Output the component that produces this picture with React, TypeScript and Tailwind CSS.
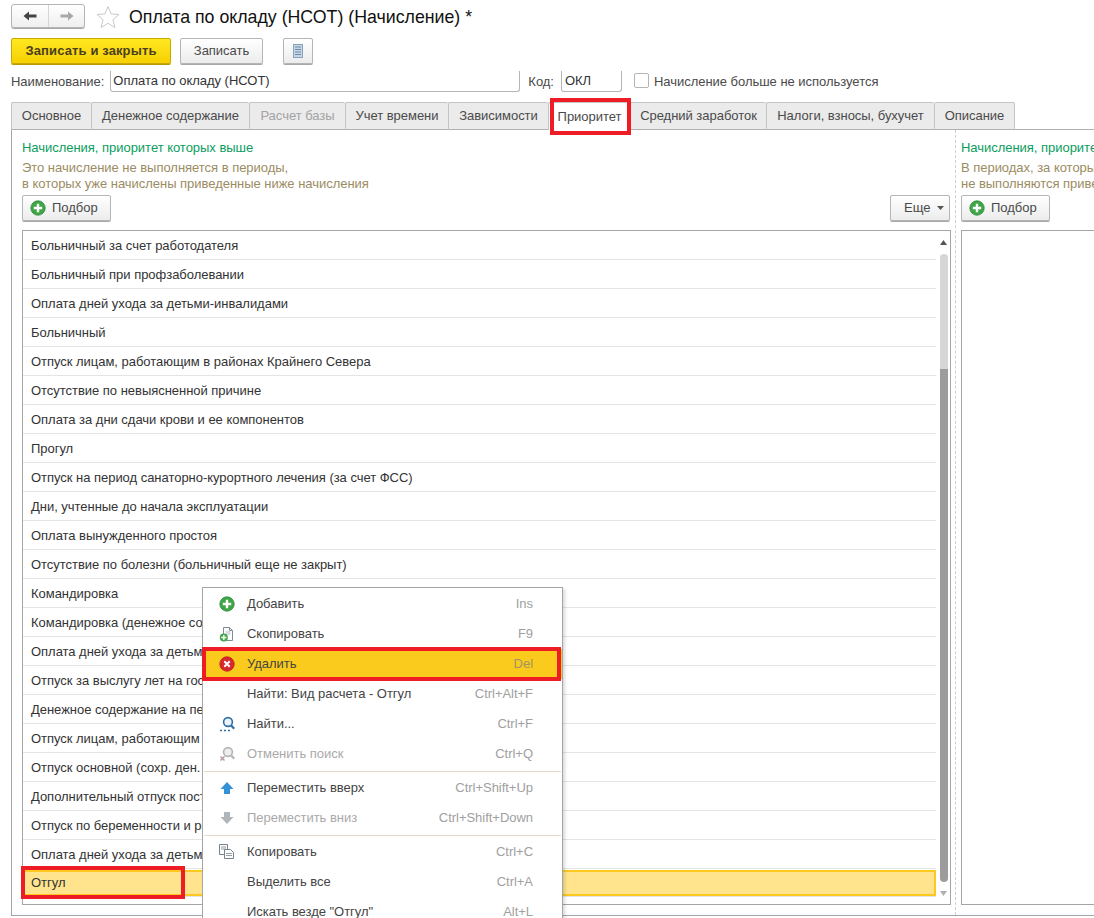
const tabs = [
  { label: 'Основное', w: 'w-[80px]' },
  { label: 'Денежное содержание', w: 'w-[158px]' },
  { label: 'Расчет базы', w: 'w-[96px]', disabled: true },
  { label: 'Учет времени', w: 'w-[103px]' },
  { label: 'Зависимости', w: 'w-[100px]' },
  { label: 'Приоритет', w: 'w-[82px]', active: true },
  { label: 'Средний заработок', w: 'w-[136px]' },
  { label: 'Налоги, взносы, бухучет', w: 'w-[168px]' },
  { label: 'Описание', w: 'w-[81px]' },
]

const rows = [
  'Больничный за счет работодателя',
  'Больничный при профзаболевании',
  'Оплата дней ухода за детьми-инвалидами',
  'Больничный',
  'Отпуск лицам, работающим в районах Крайнего Севера',
  'Отсутствие по невыясненной причине',
  'Оплата за дни сдачи крови и ее компонентов',
  'Прогул',
  'Отпуск на период санаторно-курортного лечения (за счет ФСС)',
  'Дни, учтенные до начала эксплуатации',
  'Оплата вынужденного простоя',
  'Отсутствие по болезни (больничный еще не закрыт)',
  'Командировка',
  'Командировка (денежное содержание)',
  'Оплата дней ухода за детьми-инвалидами',
  'Отпуск за выслугу лет на госслужбе',
  'Денежное содержание на период отпуска',
  'Отпуск лицам, работающим в районах Крайнего Севера',
  'Отпуск основной (сохр. ден. содержания)',
  'Дополнительный отпуск пострадавшим',
  'Отпуск по беременности и родам',
  'Оплата дней ухода за детьми-инвалидами',
]

function PlusIcon({ size = 16 }: { size?: number }) {
  return (
    <svg width={size} height={size} viewBox="0 0 16 16">
      <circle cx="8" cy="8" r="7.2" fill="#3fa648" stroke="#2b8a3a" strokeWidth="0.8" />
      <path d="M8 3.8v8.4M3.8 8h8.4" stroke="#fff" strokeWidth="2.4" />
    </svg>
  )
}

function RemoveIcon() {
  return (
    <svg width="16" height="16" viewBox="0 0 16 16">
      <circle cx="8" cy="8" r="7.2" fill="#d9262e" stroke="#b71c23" strokeWidth="0.8" />
      <path d="M5.3 5.3l5.4 5.4M10.7 5.3l-5.4 5.4" stroke="#fff" strokeWidth="2" />
    </svg>
  )
}

function CopyAddIcon() {
  return (
    <svg width="16" height="16" viewBox="0 0 16 16">
      <path d="M4.5 1.5h6l3 3v10h-9z" fill="#fff" stroke="#7f8c99" />
      <path d="M10.5 1.5v3h3" fill="none" stroke="#7f8c99" />
      <path d="M6.5 6h5M6.5 8h5" stroke="#9aa5af" strokeWidth="0.8" />
      <circle cx="4.8" cy="11.5" r="4" fill="#3fa648" />
      <path d="M4.8 9v5M2.3 11.5h5" stroke="#fff" strokeWidth="1.4" />
    </svg>
  )
}

function SearchIcon({ off }: { off?: boolean }) {
  const c = off ? '#b5b5b5' : '#2f6fa5'
  return (
    <svg width="16" height="16" viewBox="0 0 16 16">
      <circle cx="9" cy="6" r="4.4" fill={off ? '#eee' : '#eaf3fa'} stroke={c} strokeWidth="1.6" />
      <path d="M12.2 9.4l3 3.4" stroke={c} strokeWidth="2.2" />
      {off ? (
        <path d="M1.5 10.5l4 4M5.5 10.5l-4 4" stroke="#b89aa0" strokeWidth="1.6" />
      ) : (
        <path d="M1 14.5h2M5 14.5h2M9 14.5h2" stroke="#2f6fa5" strokeWidth="1.6" />
      )}
    </svg>
  )
}

function ArrowIcon({ down, color }: { down?: boolean; color: string }) {
  return (
    <svg width="16" height="16" viewBox="0 0 16 16">
      <path d={down ? 'M5 2h6v5h3.5L8 14 1.5 7H5z' : 'M8 2l6.5 7H11v5H5V9H1.5z'} fill={color} />
    </svg>
  )
}

function ClipboardIcon() {
  return (
    <svg width="16" height="16" viewBox="0 0 16 16" fill="#fff" stroke="#77828c">
      <path d="M0.5 0.5h8v10h-8z" />
      <path d="M2 3h5M2 5h5" strokeWidth="0.8" />
      <path d="M5.5 5.5h6l3 3v6h-9z" />
      <path d="M7 9.5h6M7 11.5h6" strokeWidth="0.8" />
    </svg>
  )
}

function ActionButton({ children, className }: { children: React.ReactNode; className: string }) {
  return (
    <div className={`flex h-[26px] items-center rounded-[2px] border border-[#b5b5b5] bg-gradient-to-b from-white to-[#ececec] text-[#4a4a4a] shadow-[0_1px_0_#a8a8a8] ${className}`}>
      {children}
    </div>
  )
}

function MenuItem({ icon, label, keys, off }: { icon?: React.ReactNode; label: string; keys: string; off?: boolean }) {
  return (
    <div className="flex h-[30px] items-center pr-[29px]">
      <div className="flex w-[44px] justify-center pl-[4px]">{icon}</div>
      <span className={off ? 'text-[#a9a9a9]' : 'text-[#444]'}>{label}</span>
      <span className="ml-auto text-[#a0a0a0]">{keys}</span>
    </div>
  )
}

export default function App() {
  return (
    <div className="relative h-[918px] w-[1094px] overflow-hidden bg-white font-['Liberation_Sans',Arial,sans-serif] text-[13px] tracking-[-0.03px] text-[#4a4a4a]">
      <div className="flex h-[38px] items-start pl-[11px] pt-[4px]">
        <div className="flex h-[24px] w-[74px] items-center rounded-[3px] border border-[#b5b5b5] bg-gradient-to-b from-white to-[#efefef] shadow-[0_1px_0_#a8a8a8]">
          <div className="flex h-full w-[37px] items-center justify-center border-r border-[#d5d5d5]">
            <svg width="14" height="12" viewBox="0 0 14 12"><path d="M0.5 6L6 1.5V4.6h7.5v2.8H6v3.1z" fill="#444" /></svg>
          </div>
          <div className="flex h-full flex-1 items-center justify-center">
            <svg width="14" height="12" viewBox="0 0 14 12"><path d="M13.5 6L8 1.5V4.6H0.5v2.8H8v3.1z" fill="#a8a8a8" /></svg>
          </div>
        </div>
        <svg className="ml-[11px] mt-[1px]" width="24" height="24" viewBox="0 0 24 24">
          <path d="M12 1.5l3.1 7.4 7.9.6-6 5.2 1.9 7.8L12 18.3l-6.9 4.2L7 14.7 1 9.5l7.9-.6z" fill="#fff" stroke="#c9c9c9" />
        </svg>
        <h1 className="ml-[9px] text-[17.75px] leading-[27px] tracking-normal text-[#111]">Оплата по окладу (НСОТ) (Начисление) *</h1>
      </div>

      <div className="flex h-[33px] items-start pl-[11px]">
        <div className="flex h-[26px] w-[160px] items-center justify-center rounded-[2px] border border-[#c9a900] bg-gradient-to-b from-[#ffe81f] to-[#f7d000] font-bold tracking-[0.12px] text-[#4a4020] shadow-[0_1px_0_#b89c00]">
          Записать и закрыть
        </div>
        <ActionButton className="ml-[9px] w-[83px] justify-center">Записать</ActionButton>
        <ActionButton className="ml-[20px] w-[30px] justify-center">
          <svg width="10" height="14" viewBox="0 0 10 14">
            <rect x="0.5" y="0.5" width="9" height="13" fill="#c5d6e6" stroke="#8aa3ba" />
            <path d="M2 3h6M2 5.5h6M2 8h6M2 10.5h6" stroke="#6f8ba5" />
          </svg>
        </ActionButton>
      </div>

      <div className="flex h-[31px] items-start pl-[11px]">
        <span className="mt-[1px]">Наименование:</span>
        <div className="ml-[6px] h-[21px] w-[410px] rounded-b-[3px] border-x border-b border-[#b5b5b5] pl-[2px] text-[#333]">Оплата по окладу (НСОТ)</div>
        <span className="ml-[8px] mt-[1px]">Код:</span>
        <div className="ml-[7px] h-[21px] w-[61px] rounded-b-[3px] border-x border-b border-[#b5b5b5] pl-[3px] text-[#333]">ОКЛ</div>
        <div className="ml-[12px] mt-[2px] h-[15px] w-[15px] rounded-[2px] border border-[#b5b5b5]" />
        <span className="ml-[5px] mt-[1px]">Начисление больше не используется</span>
      </div>

      <div className="ml-[11px] flex h-[28px] border-b border-[#b0b0b0]">
        {tabs.map((tab) => (
          <div
            key={tab.label}
            className={`flex h-[28px] items-center justify-center rounded-t-[2px] border border-r-0 border-[#c4c4c4] last:border-r ${tab.w} ${
              tab.active ? 'border-b-0 bg-white' : 'border-b-[#b0b0b0] bg-[#ebebeb]'
            } ${tab.disabled ? 'text-[#a3a3a3]' : ''}`}
          >
            {tab.label}
          </div>
        ))}
      </div>

      <div className="ml-[11px] flex h-[786px] border-b border-l border-[#a5a5a5] pl-[10px] pt-[10px]">
        <div className="flex w-[929px] flex-col">
          <div className="h-[16px] leading-[16px] text-[#0a9d5e]">Начисления, приоритет которых выше</div>
          <div className="mt-[4px] leading-[16px] text-[#9b8c63]">Это начисление не выполняется в периоды,<br />в которых уже начислены приведенные ниже начисления</div>
          <div className="mt-[3px] flex justify-between">
            <ActionButton className="w-[89px] pl-[7px]">
              <PlusIcon />
              <span className="ml-[6px]">Подбор</span>
            </ActionButton>
            <ActionButton className="mr-[1px] w-[60px] pl-[13px]">
              Еще
              <svg className="ml-[7px]" width="7" height="4" viewBox="0 0 7 4"><path d="M0 0h7L3.5 4z" fill="#555" /></svg>
            </ActionButton>
          </div>
          <div className="mt-[9px] flex h-[675px] border border-[#a5a5a5] text-[#333]">
            <div className="w-[913px]">
              {rows.map((row) => (
                <div key={row} className="flex h-[29px] items-center whitespace-nowrap border-b border-[#e4e4e4] pl-[8px] pt-[1px]">{row}</div>
              ))}
              <div className="mt-[1px] h-[27px] border-b border-[#e4e4e4]">
                <div className="flex h-[26px] items-center border-2 border-[#fbc91f] bg-[#ffe48d] pl-[6px]">Отгул</div>
              </div>
            </div>
            <div className="flex w-[14px] flex-col items-center pl-[1px] pt-[9px]">
              <svg width="7" height="5" viewBox="0 0 7 5"><path d="M3.5 0L7 5H0z" fill="#555" /></svg>
              <div className="mt-[9px] h-[115px] w-[8px] rounded-t-[4px] bg-[#d6d6d6]" />
              <div className="h-[513px] w-[8px] rounded-b-[4px] bg-[#9c9c9c]" />
              <svg className="mt-[9px]" width="7" height="5" viewBox="0 0 7 5"><path d="M0 0h7L3.5 5z" fill="#b0b0b0" /></svg>
            </div>
          </div>
        </div>
        <div className="mx-[4px] mt-[-10px] h-[785px] border-l border-dashed border-[#cfcfcf]" />
        <div className="flex flex-1 flex-col whitespace-nowrap pl-[1px]">
          <div className="h-[16px] leading-[16px] text-[#0a9d5e]">Начисления, приоритет которых ниже</div>
          <div className="mt-[4px] leading-[16px] text-[#9b8c63]">В периодах, за которые уже начислено это начисление,<br />не выполняются приведенные ниже начисления</div>
          <div className="mt-[3px] flex">
            <ActionButton className="w-[89px] pl-[7px]">
              <PlusIcon />
              <span className="ml-[6px]">Подбор</span>
            </ActionButton>
          </div>
          <div className="mt-[9px] h-[675px] w-[140px] border border-[#a5a5a5]" />
        </div>
      </div>

      <div className="absolute left-[550px] top-[98px] h-[37px] w-[81px] border-[4px] border-[#ee1c25]" />
      <div className="absolute left-[21px] top-[866px] h-[33px] w-[164px] border-[4px] border-[#ee1c25]" />

      <div className="absolute left-[202px] top-[587px] h-[340px] w-[361px] border border-[#a5a5a5] bg-white pt-[1px] shadow-[2px_2px_3px_rgba(0,0,0,0.15)]">
        <MenuItem icon={<PlusIcon />} label="Добавить" keys="Ins" />
        <MenuItem icon={<CopyAddIcon />} label="Скопировать" keys="F9" />
        <div className="flex h-[30px] items-center bg-[#facb1c] pr-[29px]">
          <div className="flex w-[44px] justify-center pl-[4px]"><RemoveIcon /></div>
          <span className="text-[#444]">Удалить</span>
          <span className="ml-auto text-[#a39364]">Del</span>
        </div>
        <MenuItem label="Найти: Вид расчета - Отгул" keys="Ctrl+Alt+F" />
        <MenuItem icon={<SearchIcon />} label="Найти..." keys="Ctrl+F" />
        <MenuItem icon={<SearchIcon off />} label="Отменить поиск" keys="Ctrl+Q" off />
        <div className="mb-[1px] ml-px mt-[2px] w-[357px] border-t border-[#e2dcc8]" />
        <MenuItem icon={<ArrowIcon color="#3592d6" />} label="Переместить вверх" keys="Ctrl+Shift+Up" />
        <MenuItem icon={<ArrowIcon down color="#b0b5ba" />} label="Переместить вниз" keys="Ctrl+Shift+Down" off />
        <div className="mb-[1px] ml-px mt-[2px] w-[357px] border-t border-[#e2dcc8]" />
        <MenuItem icon={<ClipboardIcon />} label="Копировать" keys="Ctrl+C" />
        <MenuItem label="Выделить все" keys="Ctrl+A" />
        <MenuItem label={'Искать везде "Отгул"'} keys="Alt+L" />
      </div>
      <div className="absolute left-[202px] top-[647px] h-[34px] w-[359px] border-[4px] border-[#ee1c25]" />
    </div>
  )
}
